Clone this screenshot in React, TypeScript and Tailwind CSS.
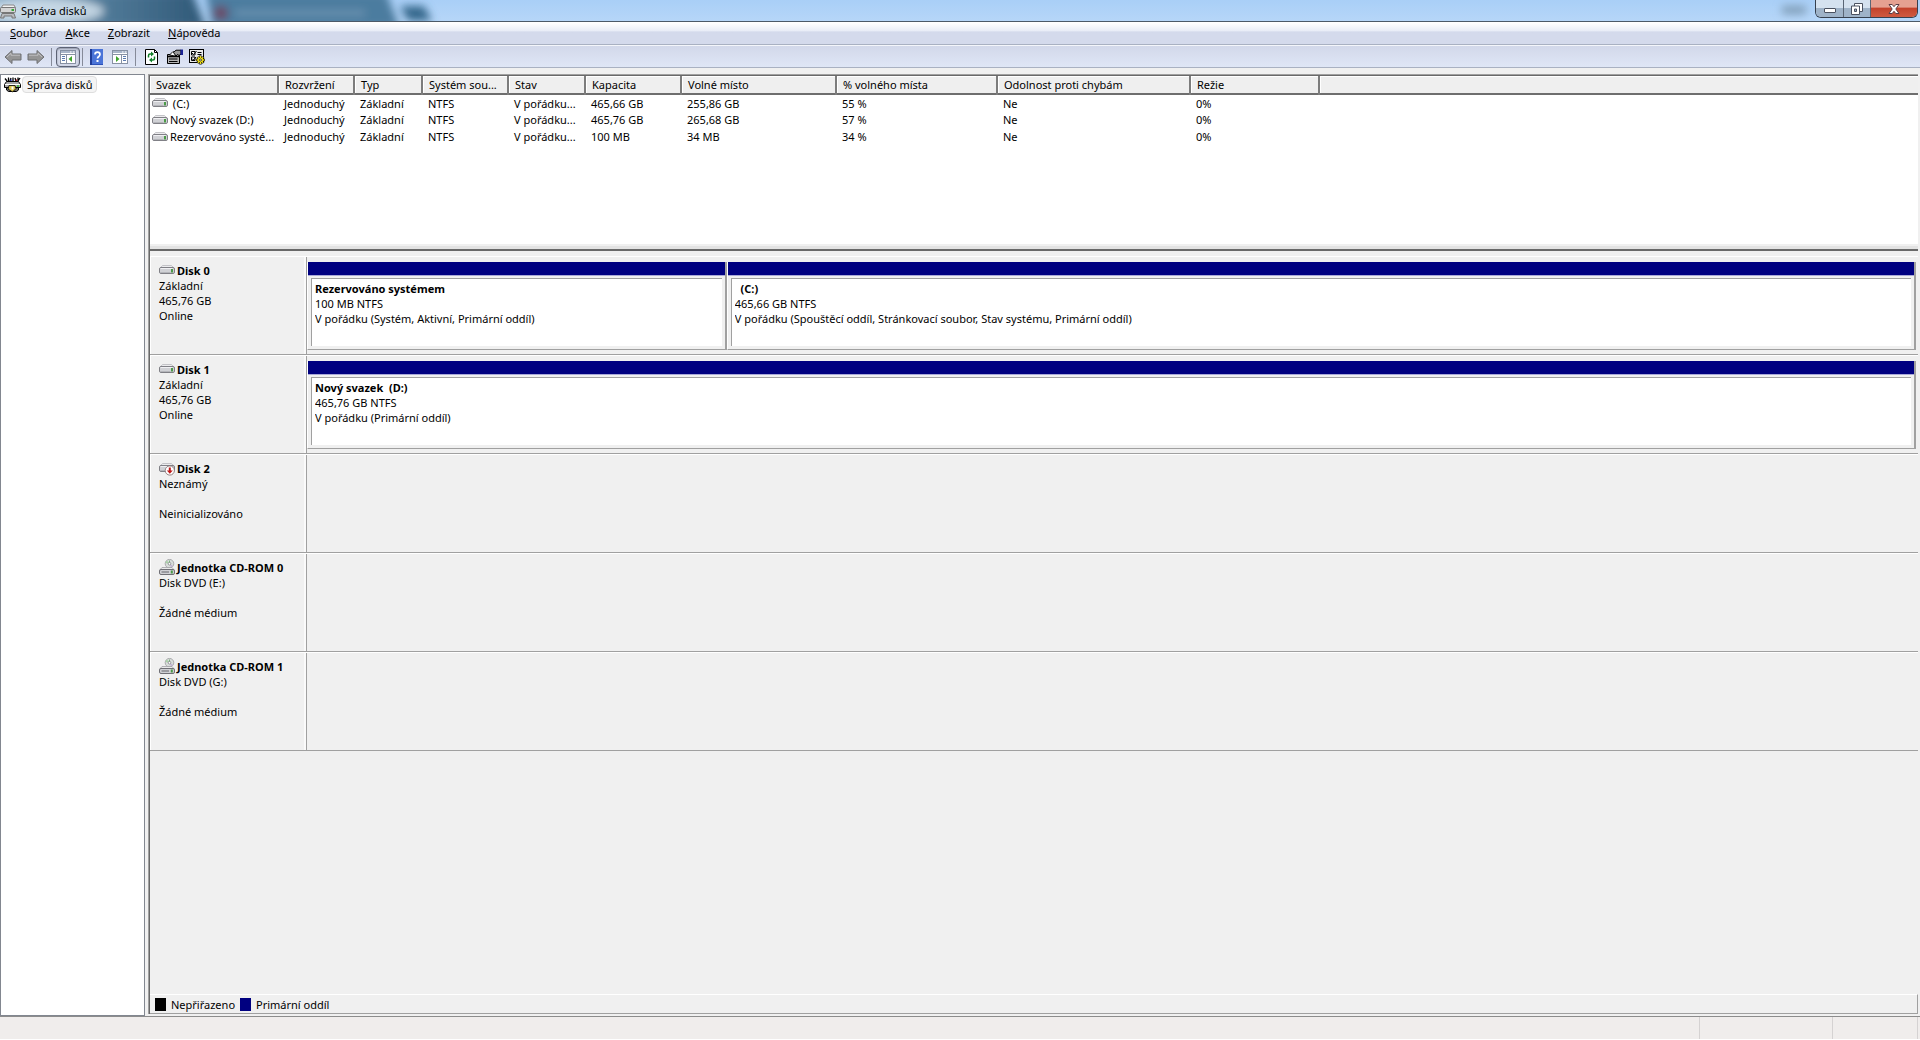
import type { ReactNode } from 'react';

type Volume = { name: string; size: string; status: string; grow: string };
type Disk = {
  name: string;
  icon: 'disk' | 'unknown' | 'cdrom';
  lines: string[];
  volumes: Volume[];
};

const columns = [
  { label: 'Svazek', width: 'w-[128px]' },
  { label: 'Rozvržení', width: 'w-[76px]' },
  { label: 'Typ', width: 'w-[68px]' },
  { label: 'Systém sou...', width: 'w-[86px]' },
  { label: 'Stav', width: 'w-[77px]' },
  { label: 'Kapacita', width: 'w-[96px]' },
  { label: 'Volné místo', width: 'w-[155px]' },
  { label: '% volného místa', width: 'w-[161px]' },
  { label: 'Odolnost proti chybám', width: 'w-[193px]' },
  { label: 'Režie', width: 'w-[129px]' },
];

const rows = [
  ['\u00a0(C:)', 'Jednoduchý', 'Základní', 'NTFS', 'V pořádku...', '465,66 GB', '255,86 GB', '55 %', 'Ne', '0%'],
  ['Nový svazek (D:)', 'Jednoduchý', 'Základní', 'NTFS', 'V pořádku...', '465,76 GB', '265,68 GB', '57 %', 'Ne', '0%'],
  ['Rezervováno systé...', 'Jednoduchý', 'Základní', 'NTFS', 'V pořádku...', '100 MB', '34 MB', '34 %', 'Ne', '0%'],
];

const disks: Disk[] = [
  {
    name: 'Disk 0',
    icon: 'disk',
    lines: ['Základní', '465,76 GB', 'Online'],
    volumes: [
      {
        name: 'Rezervováno systémem',
        size: '100 MB NTFS',
        status: 'V pořádku (Systém, Aktivní, Primární oddíl)',
        grow: 'flex-[26]',
      },
      {
        name: '\u00a0\u00a0(C:)',
        size: '465,66 GB NTFS',
        status: 'V pořádku (Spouštěcí oddíl, Stránkovací soubor, Stav systému, Primární oddíl)',
        grow: 'flex-[74]',
      },
    ],
  },
  {
    name: 'Disk 1',
    icon: 'disk',
    lines: ['Základní', '465,76 GB', 'Online'],
    volumes: [
      {
        name: 'Nový svazek\u00a0 (D:)',
        size: '465,76 GB NTFS',
        status: 'V pořádku (Primární oddíl)',
        grow: 'flex-1',
      },
    ],
  },
  { name: 'Disk 2', icon: 'unknown', lines: ['Neznámý', '', 'Neinicializováno'], volumes: [] },
  { name: 'Jednotka CD-ROM 0', icon: 'cdrom', lines: ['Disk DVD (E:)', '', 'Žádné médium'], volumes: [] },
  { name: 'Jednotka CD-ROM 1', icon: 'cdrom', lines: ['Disk DVD (G:)', '', 'Žádné médium'], volumes: [] },
];

const DriveShape = () => (
  <>
    <path d="M.8 6.500 3.500 3.500h9L15.200 6.500z" fill="#ececee" stroke="#b8b8bc" strokeWidth=".8" />
    <rect x=".5" y="5.500" width="15" height="6" rx="1.500" fill="#d0d1d5" stroke="#808086" />
    <path d="M1.500 6.500h12" stroke="#f0f0f3" />
    <path d="M1.500 10.500h10" stroke="#b4b5ba" />
    <rect x="12" y="7" width="2" height="3.500" fill="#4b9a48" />
  </>
);

const DiskIcon = () => (
  <svg viewBox="0 0 16 16" className="h-4 w-4 shrink-0">
    <DriveShape />
  </svg>
);

const UnknownDiskIcon = () => (
  <svg viewBox="0 0 16 16" className="h-4 w-4 shrink-0">
    <DriveShape />
    <circle cx="10.800" cy="10.500" r="4.600" fill="#fff" stroke="#8a7676" strokeWidth=".9" />
    <path d="M9.800 7.500h2v3h2l-3 3.300-3-3.300h2z" fill="#c01818" />
  </svg>
);

const CdromIcon = () => (
  <svg viewBox="0 0 16 16" className="h-4 w-4 shrink-0">
    <circle cx="10.500" cy="4.700" r="4.300" fill="#d9dddb" stroke="#9a9a9e" strokeWidth=".8" />
    <path d="M10.500 4.700 8 1.400a4 4 0 0 0-1.500 2.500z" fill="#a9d2a8" />
    <path d="M10.500 4.700 14 6.700a4 4 0 0 1-2 2z" fill="#c3b4d2" />
    <path d="M10.500 1.500v2.500" stroke="#79b57c" />
    <circle cx="10.500" cy="4.700" r="1.300" fill="#fff" stroke="#77777d" strokeWidth=".7" />
    <path d="M.8 11 3 8.500h10L15.200 11z" fill="#e9e9ea" stroke="#a0a0a4" strokeWidth=".8" />
    <rect x=".5" y="10.500" width="15" height="5" rx="1.500" fill="#cfd0d4" stroke="#707076" />
    <path d="M2.500 13h7.500" stroke="#66666c" />
    <rect x="11.800" y="11.500" width="2" height="3" fill="#4b9a48" />
  </svg>
);

const diskIcons = { disk: <DiskIcon />, unknown: <UnknownDiskIcon />, cdrom: <CdromIcon /> };

const ArrowIcon = ({ flip }: { flip?: boolean }) => (
  <svg viewBox="0 0 18 16" className={flip ? 'h-4 w-[18px] -scale-x-100' : 'h-4 w-[18px]'}>
    <path d="M1 8 8 1.500V5h9v6H8v3.500z" fill="#959595" stroke="#6f7073" strokeLinejoin="round" />
    <path d="M3 8 7 4.200V6.200h9" fill="none" stroke="#c0c0c2" />
  </svg>
);

const PaneIcon = ({ side }: { side: 'left' | 'right' }) => (
  <svg viewBox="0 0 16 14" className="h-[14px] w-4">
    <rect x=".5" y=".5" width="15" height="13" fill="#fff" stroke="#8791a3" />
    <rect x="1" y="1" width="14" height="2" fill="#aab6c9" />
    <path d="M10 2h1.500M13 2h1.500" stroke="#fff" />
    <path d="M1 4.500h14" stroke="#8791a3" />
    {side === 'left' ? (
      <>
        <path d="M6.500 4.500v9" stroke="#8791a3" />
        <path d="M2 6.500h3M2 8.500h3M2 10.500h3" stroke="#5d7cb0" />
        <path d="M12 6v6L8.500 9z" fill="#3fa32c" />
      </>
    ) : (
      <>
        <path d="M9.500 4.500v9" stroke="#8791a3" />
        <path d="M11 6.500h3M11 8.500h3M11 10.500h3" stroke="#5d7cb0" />
        <path d="M4 6v6L7.500 9z" fill="#3fa32c" />
      </>
    )}
  </svg>
);

const HelpIcon = () => (
  <svg viewBox="0 0 13 16" className="h-4 w-[13px]">
    <rect width="13" height="16" fill="#2b50b8" />
    <rect x="2" y="0" width="11" height="15" fill="#4a74d8" />
    <path d="M0 0h2v16H0z" fill="#1f3c98" />
    <path d="M5 5.500c0-3.300 5-3.300 5 0 0 2-2.500 2-2.500 4" fill="none" stroke="#fff" strokeWidth="1.700" />
    <rect x="6.500" y="11" width="2" height="2" fill="#fff" />
  </svg>
);

const RefreshIcon = () => (
  <svg viewBox="0 0 13 16" className="h-4 w-[13px]">
    <path d="M.5.5h9l3 3v12H.5z" fill="#fff" stroke="#000" />
    <path d="M9.500.5v3h3" fill="none" stroke="#000" />
    <path d="M3.500 8.500V6.500q0-1.500 1.500-1.500h2" fill="none" stroke="#12802a" strokeWidth="1.500" />
    <path d="M6 2.500 9 5 6 7.500z" fill="#12802a" />
    <path d="M9.500 7.500v2q0 1.500-1.500 1.500H6" fill="none" stroke="#12802a" strokeWidth="1.500" />
    <path d="M7 8.500 4 11l3 2.500z" fill="#12802a" />
  </svg>
);

const PropertiesIcon = () => (
  <svg viewBox="0 0 16 16" className="h-4 w-4">
    <path d="M.5 5.500h12v9H.5z" fill="#b5b5b5" stroke="#000" />
    <path d="M1 7.500h11" stroke="#000" strokeWidth="1.500" />
    <path d="M2 10h8.500M2 12.500h8.500" stroke="#000" strokeWidth="1.200" />
    <path d="M2.500 6 6 2.500 9.500 5 8 7z" fill="#fff" stroke="#000" strokeWidth=".9" />
    <path d="M6.500 3.500 9 1.200h5v4l-2 1.300-1.500-1-1.500 1.500z" fill="#9a9a9a" stroke="#000" />
    <path d="M13.500.5h2.500V6h-2.500z" fill="#1a2396" />
  </svg>
);

const SettingsIcon = () => (
  <svg viewBox="0 0 17 16" className="h-4 w-[17px]">
    <rect x=".5" y=".5" width="14" height="13" fill="#ececec" stroke="#000" />
    <path d="M2.500 2.500h3.500v3.500H2.500zM2.500 8h3.500v3.500H2.500z" fill="#fff" stroke="#000" />
    <path d="m3 4 1.500 1.500L7.500 2M3 9.500 4.500 11 7 8" fill="none" stroke="#000" />
    <path d="M8.500 3.500h4M8.500 5.500h4" stroke="#000" />
    <g stroke="#000" strokeWidth="2.400">
      <path d="M11.500 6.500v9M7 11h9M8.500 8l6 6M14.500 8l-6 6" />
    </g>
    <g stroke="#f2e21a" strokeWidth="1.300">
      <path d="M11.500 7v8M7.500 11h8M8.800 8.300l5.400 5.400M14.200 8.300l-5.400 5.400" />
    </g>
    <circle cx="11.500" cy="11" r="2.400" fill="#f2e21a" />
    <circle cx="11.500" cy="11" r="1" fill="#fff" stroke="#000" strokeWidth=".7" />
  </svg>
);

const TreeIcon = () => (
  <svg viewBox="0 0 17 16" className="h-4 w-[17px] shrink-0">
    <path d="M1 1.500 3 4M4.500.5v4M7 1l-1 3M9 .5v4M11 1l1 3M14 .5V4M16 1l-2 3" stroke="#000" strokeWidth="1.300" />
    <path d="M7 2.500v2" stroke="#1b2ec0" strokeWidth="1.300" />
    <path d="M12.500 2.500v2" stroke="#c01b1b" strokeWidth="1.300" />
    <path d="M2.500 4.500h12l2 3v3h-16v-3z" fill="#a6a6a6" stroke="#000" />
    <path d="M1 7.500h15" stroke="#fff" />
    <path d="M2.500 10.500h12v2.500l-2 1.500h-8l-2-1.500z" fill="#6c6c6c" stroke="#000" />
    <path d="M5 8.500h6l1 3-3.500 3.500L4 12z" fill="#d9c34c" stroke="#000" strokeWidth=".8" />
    <path d="M7.500 9.500h2v3h-2z" fill="#fff" />
    <path d="M13 9h2" stroke="#2db52d" strokeWidth="1.500" />
  </svg>
);

const WindowIcon = () => (
  <svg viewBox="0 0 16 16" className="h-4 w-4">
    <path d="M1 5 3 2h11l1.500 3z" fill="#f2f2f2" stroke="#888" />
    <rect x=".5" y="4.500" width="15" height="5" rx="1" fill="#d4d4d4" stroke="#777" />
    <rect x="11.500" y="6" width="2.500" height="2" fill="#35a83a" />
    <path d="M2 10.500h12l1.500 4.500H12v-2H4v2H.5z" fill="#b9bcc0" stroke="#777" />
  </svg>
);

/* Tabs of the window behind, seen through the glass title bar */
const GlassBackdrop = () => (
  <svg className="absolute inset-0 h-full w-full" aria-hidden="true">
    <defs>
      <filter id="glass" x="-10%" y="-50%" width="120%" height="200%">
        <feGaussianBlur stdDeviation="4" />
      </filter>
      <linearGradient id="tab" x1="0" x2="1">
        <stop offset="0" stopColor="#8db0cb" />
        <stop offset=".5" stopColor="#547e9c" />
        <stop offset="1" stopColor="#2f5877" />
      </linearGradient>
    </defs>
    <g filter="url(#glass)">
      <path d="M-20-8H192l14 36H-20z" fill="url(#tab)" />
      <path d="M206-8H386l14 36H212z" fill="#4b7c9f" />
      <path d="M400 6h24l8 15h-24z" fill="#35678c" />
      <circle cx="221" cy="13" r="7" fill="#6d4560" />
      <path d="M235 13h130" stroke="#7096b4" strokeWidth="5" />
      <path d="M1782 10h24" stroke="#7e9bb5" strokeWidth="8" />
      <ellipse cx="44" cy="11" rx="60" ry="13" fill="#dce9f3" opacity=".8" />
    </g>
  </svg>
);

const ToolButton = ({ label, pressed, children }: { label: string; pressed?: boolean; children: ReactNode }) => (
  <button
    type="button"
    aria-label={label}
    className={
      pressed
        ? 'flex h-5 w-6 items-center justify-center rounded border border-[#5d6375] bg-[#d3d8e8] shadow-[inset_0_1px_2px_#8d93a5]'
        : 'flex h-5 w-[23px] items-center justify-center'
    }
  >
    {children}
  </button>
);

const Separator = ({ narrow }: { narrow?: boolean }) => (
  <span className={narrow ? 'mx-0.5 h-[18px] w-px bg-[#868b99]' : 'mx-1 h-[18px] w-px bg-[#868b99]'} />
);

const TitleBar = () => (
  <header className="relative flex h-[22px] shrink-0 items-start justify-between border-b border-[#4d5a68] bg-gradient-to-b from-[#a9cff7] to-[#b6d6f8]">
    <GlassBackdrop />
    <div className="relative flex h-[21px] items-center gap-[5px]">
      <WindowIcon />
      <h1>Správa disků</h1>
    </div>
    <div className="relative mr-0.5 flex h-[18px] overflow-hidden rounded-b-md border border-t-0 border-[#36404e]">
      <button
        type="button"
        aria-label="Minimalizovat"
        className="flex w-7 items-center justify-center border-r border-[#5a6675] bg-gradient-to-b from-[#d5e2ef] from-45% to-[#9fb3c8] to-50%"
      >
        <svg viewBox="0 0 12 12" className="h-3 w-3">
          <rect x=".5" y="5.500" width="11" height="4" rx=".5" fill="#fff" stroke="#4b5260" />
        </svg>
      </button>
      <button
        type="button"
        aria-label="Obnovit"
        className="flex w-[27px] items-center justify-center border-r border-[#5a6675] bg-gradient-to-b from-[#d5e2ef] from-45% to-[#9fb3c8] to-50%"
      >
        <svg viewBox="0 0 12 12" className="h-3 w-3">
          <path d="M3.500.5h8v8h-8z" fill="#fff" stroke="#4b5260" />
          <path d="M.5 3h8v8.500h-8z" fill="#fff" stroke="#4b5260" />
          <path d="M3.500 6h2v2.500h-2z" fill="#9fb3c8" stroke="#4b5260" />
        </svg>
      </button>
      <button
        type="button"
        aria-label="Zavřít"
        className="flex w-[46px] items-center justify-center bg-gradient-to-b from-[#e5a191] from-40% via-[#c3432c] via-50% to-[#cf5a40]"
      >
        <svg viewBox="0 0 12 12" className="h-3 w-3">
          <path
            d="M1 1.500h3.200L6 3.700l1.800-2.200H11L7.800 6l3.200 4.500H7.800L6 8.300l-1.800 2.200H1L4.200 6z"
            fill="#fff"
            stroke="#5a3d45"
          />
        </svg>
      </button>
    </div>
  </header>
);

const MenuBar = () => (
  <nav className="flex h-[23px] shrink-0 items-center border-b border-[#a9b1c2] bg-gradient-to-b from-white from-5% via-[#e9edf7] via-40% to-[#d4daec] to-45% pb-0.5 pl-px">
    {['Soubor', 'Akce', 'Zobrazit', 'Nápověda'].map((item) => (
      <button key={item} type="button" className="px-[9px]">
        <span className="underline">{item[0]}</span>
        {item.slice(1)}
      </button>
    ))}
  </nav>
);

const Toolbar = () => (
  <div className="flex h-[23px] shrink-0 items-center border-t border-b border-t-[#f4f6fb] border-b-[#a9b1c2] bg-gradient-to-b from-[#d2d8ea] to-[#dfe6f6] pl-px">
    <ToolButton label="Zpět">
      <ArrowIcon />
    </ToolButton>
    <ToolButton label="Vpřed">
      <ArrowIcon flip />
    </ToolButton>
    <Separator />
    <ToolButton label="Strom konzoly" pressed>
      <PaneIcon side="left" />
    </ToolButton>
    <Separator narrow />
    <ToolButton label="Nápověda">
      <HelpIcon />
    </ToolButton>
    <ToolButton label="Podokno akcí">
      <PaneIcon side="right" />
    </ToolButton>
    <Separator />
    <ToolButton label="Aktualizovat">
      <RefreshIcon />
    </ToolButton>
    <ToolButton label="Vlastnosti">
      <PropertiesIcon />
    </ToolButton>
    <ToolButton label="Nastavení">
      <SettingsIcon />
    </ToolButton>
  </div>
);

const VolumeTable = () => (
  <div className="h-[168px] shrink-0 bg-white">
    <table className="w-full table-fixed border-collapse text-left">
      <thead>
        <tr className="h-[18px] border-b-2 border-[#6e6e6e] bg-[#efefef]">
          {columns.map((c) => (
            <th
              key={c.label}
              scope="col"
              className={`${c.width} whitespace-nowrap border-r-2 border-[#7c7c7c] p-0 pl-1.5 font-normal shadow-[inset_1px_1px_0_#fff]`}
            >
              {c.label}
            </th>
          ))}
          <td className="p-0 shadow-[inset_1px_1px_0_#fff]" />
        </tr>
      </thead>
      <tbody>
        {rows.map((row) => (
          <tr key={row[0]} className="h-[17px]">
            {row.map((cell, i) => (
              <td key={i} className={i === 0 ? 'whitespace-nowrap p-0 pl-0.5' : 'whitespace-nowrap p-0 pl-1.5'}>
                {i === 0 ? (
                  <span className="flex items-center gap-0.5">
                    <DiskIcon />
                    {cell}
                  </span>
                ) : (
                  cell
                )}
              </td>
            ))}
            <td className="p-0" />
          </tr>
        ))}
      </tbody>
    </table>
  </div>
);

const VolumeBox = ({ volume }: { volume: Volume }) => (
  <div className={`${volume.grow} flex min-w-0 flex-col border-r-2 border-b border-l border-[#a0a0a0] border-l-white`}>
    <div className="h-[14px] border-b border-[#a9a9d8] bg-[#000080]" />
    <div className="m-[3px] mt-0.5 flex-1 border-t border-l border-[#a0a0a0] bg-white pt-0.5 pl-[3px]">
      <p className="truncate font-bold">{volume.name}</p>
      <p className="truncate">{volume.size}</p>
      <p className="truncate">{volume.status}</p>
    </div>
  </div>
);

const DiskRow = ({ disk }: { disk: Disk }) => (
  <section className="flex h-[99px] border-t border-b border-t-white border-b-[#a0a0a0]">
    <div className="w-[157px] shrink-0 border-r border-l border-[#a0a0a0] border-l-white pt-[5px] pl-2 shadow-[inset_-2px_0_0_#fafafa]">
      <h2 className="flex h-4 items-center gap-0.5 font-bold">
        {diskIcons[disk.icon]}
        <span className="whitespace-nowrap">{disk.name}</span>
      </h2>
      {disk.lines.map((line, i) => (
        <p key={i} className="h-[15px]">
          {line}
        </p>
      ))}
    </div>
    <div className="flex min-w-0 flex-1 pt-[5px] pr-0.5 pb-1">
      {disk.volumes.map((v) => (
        <VolumeBox key={v.name} volume={v} />
      ))}
    </div>
  </section>
);

export default function App() {
  return (
    <div className="flex h-screen cursor-default flex-col overflow-hidden bg-[#f0f0f0] font-['Noto_Sans','Open_Sans',sans-serif] text-[11px] leading-[15px] text-black select-none">
      <TitleBar />
      <MenuBar />
      <Toolbar />

      <main className="flex min-h-0 flex-1 gap-[3px] pt-1.5">
        <aside className="w-[145px] shrink-0 border border-[#828790] bg-white pt-px pl-[3px]">
          <div className="flex items-center gap-px">
            <TreeIcon />
            <span className="rounded-sm border border-[#dedede] bg-[#f4f4f4] px-1">Správa disků</span>
          </div>
        </aside>

        <div className="mr-0.5 mb-0.5 flex min-w-0 flex-1 flex-col border-t border-l border-[#a0a0a0]">
          <div className="flex min-h-0 flex-1 flex-col border-t border-l border-[#696969]">
            <VolumeTable />
            <div className="h-[7px] shrink-0 border-t-2 border-b-2 border-t-[#f0f0f0] border-b-[#696969] bg-[#e3e3e3]" />
            <div className="min-h-0 flex-1 overflow-hidden pt-[5px]">
              {disks.map((d) => (
                <DiskRow key={d.name} disk={d} />
              ))}
            </div>
            <footer className="flex h-5 shrink-0 items-center gap-[5px] border-t border-r border-b border-[#a0a0a0] border-t-white pl-[5px]">
              <span className="h-[13px] w-[11px] bg-black" />
              <span>Nepřiřazeno</span>
              <span className="h-[13px] w-[11px] bg-[#000080]" />
              <span>Primární oddíl</span>
            </footer>
          </div>
        </div>
      </main>

      <div className="flex h-6 shrink-0 justify-end border-t border-b border-[#8c8c8c] border-b-white bg-[#f0edec] pr-0.5">
        <span className="w-[133px] border-l border-[#d5d2d2]" />
        <span className="w-[86px] border-r border-l border-[#d5d2d2]" />
      </div>
    </div>
  );
}
